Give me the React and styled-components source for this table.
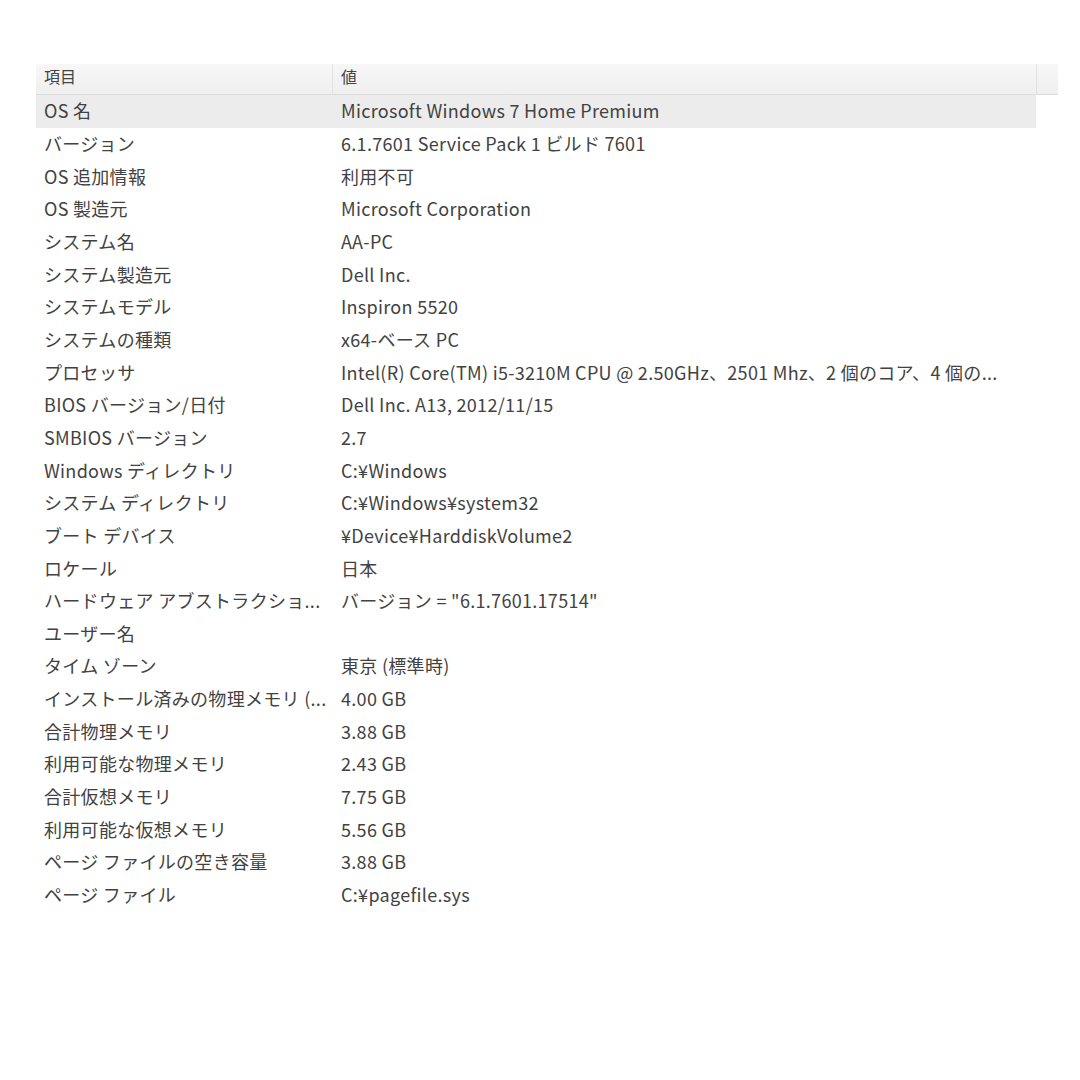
import React from 'react'
import styled, {createGlobalStyle} from 'styled-components'

const rows = [
  ['OS 名', 'Microsoft Windows 7 Home Premium'],
  ['バージョン', '6.1.7601 Service Pack 1 ビルド 7601'],
  ['OS 追加情報', '利用不可'],
  ['OS 製造元', 'Microsoft Corporation'],
  ['システム名', 'AA-PC'],
  ['システム製造元', 'Dell Inc.'],
  ['システムモデル', 'Inspiron 5520'],
  ['システムの種類', 'x64-ベース PC'],
  ['プロセッサ', 'Intel(R) Core(TM) i5-3210M CPU @ 2.50GHz、2501 Mhz、2 個のコア、4 個の...'],
  ['BIOS バージョン/日付', 'Dell Inc. A13, 2012/11/15'],
  ['SMBIOS バージョン', '2.7'],
  ['Windows ディレクトリ', 'C:¥Windows'],
  ['システム ディレクトリ', 'C:¥Windows¥system32'],
  ['ブート デバイス', '¥Device¥HarddiskVolume2'],
  ['ロケール', '日本'],
  ['ハードウェア アブストラクショ...', 'バージョン = "6.1.7601.17514"'],
  ['ユーザー名', ''],
  ['タイム ゾーン', '東京 (標準時)'],
  ['インストール済みの物理メモリ (...', '4.00 GB'],
  ['合計物理メモリ', '3.88 GB'],
  ['利用可能な物理メモリ', '2.43 GB'],
  ['合計仮想メモリ', '7.75 GB'],
  ['利用可能な仮想メモリ', '5.56 GB'],
  ['ページ ファイルの空き容量', '3.88 GB'],
  ['ページ ファイル', 'C:¥pagefile.sys'],
]

export default function App() {
  return (
    <>
      <GlobalStyle />
      <Page>
        <Table>
          <Header>
            <HeadCell $w="296px">項目</HeadCell>
            <HeadCell $w="704px">値</HeadCell>
            <HeadCell $w="22px" />
          </Header>
          {rows.map(([name, value], i) => (
            <Row key={i} $selected={i === 0}>
              <Cell $w="296px">{name}</Cell>
              <Cell $w="704px">{value}</Cell>
            </Row>
          ))}
        </Table>
      </Page>
    </>
  )
}

const GlobalStyle = createGlobalStyle`
  html, body {
    margin: 0;
    background: #fff;
  }
  body {
    font-family: "Noto Sans CJK JP", "Noto Sans", sans-serif;
    color: #424242;
  }
`

const Page = styled.div`
  width: 1080px;
  height: 1080px;
  padding: 64px 0 0 36px;
  box-sizing: border-box;
`

const Table = styled.div`
  display: flex;
  flex-direction: column;
  width: 1022px;
`

const Header = styled.div`
  display: flex;
  height: 31px;
  background: linear-gradient(#f7f7f7, #efefef);
  border-bottom: 1px solid #dcdcdc;
  box-sizing: border-box;
`

const HeadCell = styled.div`
  width: ${p => p.$w};
  flex: none;
  display: flex;
  align-items: center;
  padding: 0 0 6px 8px;
  box-sizing: border-box;
  font-size: 16px;
  color: #444;
  & + & {
    border-left: 1px solid #e2e2e2;
  }
`

const Row = styled.div`
  display: flex;
  height: 32.67px;
  width: 1000px;
  background: ${p => (p.$selected ? '#ececec' : 'transparent')};
`

const Cell = styled.div`
  width: ${p => p.$w};
  flex: none;
  display: flex;
  align-items: center;
  padding: 0 0 2px 8px;
  box-sizing: border-box;
  font-size: 18px;
  letter-spacing: 0.3px;
  white-space: nowrap;
  overflow: hidden;
  & + & {
    padding-left: 9px;
  }
`
